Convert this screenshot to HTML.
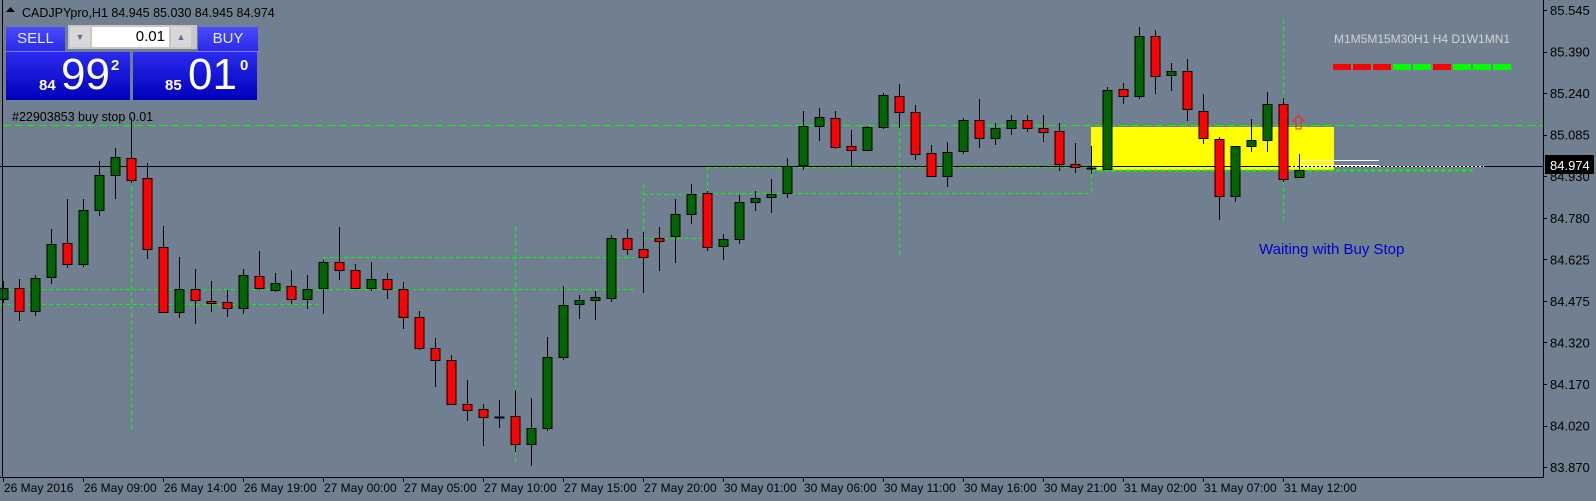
<!DOCTYPE html>
<html><head><meta charset="utf-8">
<style>
html,body{margin:0;padding:0;}
body{width:1596px;height:501px;background:#708090;position:relative;overflow:hidden;font-family:"Liberation Sans",sans-serif;}
svg{position:absolute;left:0;top:0;}
.btnTop{position:absolute;height:24px;background:linear-gradient(#4b4bff,#2a2ae8);color:#e8e8ff;font-size:15px;text-align:center;line-height:24px;border-bottom:1px solid #8080ff;}
.big{position:absolute;top:52px;height:48px;background:linear-gradient(#2b2bf0,#0000b8);color:#fff;}
.big .s{position:absolute;font-size:15px;font-weight:bold;}
.big .l{position:absolute;font-size:44px;}
.big .e{position:absolute;font-size:15px;font-weight:bold;}
</style></head><body>
<svg id="c" width="1596" height="501" xmlns="http://www.w3.org/2000/svg"></svg>

<div class="btnTop" style="left:6px;top:27px;width:59px;">SELL</div>
<div class="btnTop" style="left:198px;top:27px;width:60px;">BUY</div>
<div style="position:absolute;left:68px;top:25px;width:129px;height:24px;background:#c8c8c8;"></div>
<div style="position:absolute;left:70px;top:27px;width:20px;height:20px;background:#d8d8d8;color:#5a6aa8;font-size:9px;text-align:center;line-height:20px;">&#9660;</div>
<div style="position:absolute;left:92px;top:27px;width:77px;height:20px;background:#fff;color:#000;font-size:15px;text-align:right;line-height:20px;box-sizing:border-box;padding-right:4px;">0.01</div>
<div style="position:absolute;left:171px;top:27px;width:20px;height:20px;background:#d8d8d8;color:#5a6aa8;font-size:9px;text-align:center;line-height:20px;">&#9650;</div>

<div class="big" style="left:6px;width:124px;"><span class="s" style="left:33px;top:25px;">84</span><span class="l" style="left:55px;top:-2px;">99</span><span class="e" style="left:105px;top:5px;">2</span></div>
<div class="big" style="left:133px;width:124px;"><span class="s" style="left:32px;top:25px;">85</span><span class="l" style="left:55px;top:-2px;">01</span><span class="e" style="left:107px;top:5px;">0</span></div>

<script>
var d=[
['g',288,299,281,303],['r',288,311,279,321],['g',278,311,275,316],['g',244,277,229,284],['r',243,264,199,268],
['g',210,264,199,267],['g',175,210,161,216],['g',157,175,148,199],['r',158,180,118,183],['r',178,249,163,259],
['r',247,312,226,312],['g',289,312,257,318],['r',289,300,269,324],['r',301,303,281,312],['r',302,308,290,317],
['g',275,308,269,314],['r',276,288,251,290],['g',283,290,273,292],['r',286,299,270,304],['g',289,299,275,309],
['g',262,288,260,314],['r',262,270,227,280],['r',270,288,264,288],['g',279,288,262,291],['r',279,289,273,299],
['r',289,317,282,329],['r',317,348,311,350],['r',348,360,338,387],['r',360,404,355,404],['r',404,410,380,421],
['r',409,417,404,446],['d',417,417,400,428],['r',416,444,390,452],['g',428,444,398,466],['g',357,428,337,431],
['g',305,357,286,360],['g',300,304,295,319],['g',297,300,291,320],['g',238,298,235,302],['r',238,249,229,255],
['r',249,257,232,293],['r',238,241,227,271],['g',214,236,199,263],['g',194,214,184,224],['r',193,247,191,251],
['g',239,246,234,260],['g',202,239,195,244],['g',198,202,191,211],['g',194,197,179,213],['g',166,193,158,198],
['g',126,165,111,170],['g',117,126,108,141],['r',118,147,111,149],['r',146,150,130,167],['g',127,150,126,151],
['g',95,127,93,129],['r',96,112,84,128],['r',112,154,105,160],['r',153,176,145,176],['g',152,176,142,187],
['g',120,151,118,154],['r',120,138,99,148],['g',128,138,123,145],['g',120,128,115,135],['r',120,128,115,132],
['r',128,132,115,142],['r',131,164,123,171],['r',164,167,143,173],['d',168,168,146,174],['g',90,169,87,169],
['r',89,96,83,104],['g',36,96,27,99],['r',36,76,30,94],['g',71,75,63,91],['r',71,109,59,121],
['r',111,138,94,144],['r',139,196,137,220],['g',146,196,146,202],['g',140,146,119,152],['g',104,140,92,152],
['r',104,179,98,182],['g',170,177,154,177]];
var s='';
function L(x1,y1,x2,y2,c,w,da){s+='<line x1="'+x1+'" y1="'+y1+'" x2="'+x2+'" y2="'+y2+'" stroke="'+c+'" stroke-width="'+(w||1)+'"'+(da?' stroke-dasharray="'+da+'"':'')+'/>';}
function T(x,y,t,sz,c,a){s+='<text x="'+x+'" y="'+y+'" font-family="Liberation Sans,sans-serif" font-size="'+sz+'" fill="'+c+'"'+(a?' text-anchor="'+a+'"':'')+'>'+t+'</text>';}
var G='#00ff00';
s+='<rect x="1091" y="127" width="243" height="43" fill="#ffff00"/>';
L(3,125.5,1543,125.5,G,1,'8 4');
L(0,289.5,636,289.5,G,1,'4 3');L(0,304.5,320,304.5,G,1,'4 3');
L(323,257.5,636,257.5,G,1,'4 3');
L(131.5,166,131.5,430,G,1,'4 3');L(515.5,227,515.5,465,G,1,'4 3');
L(643.5,184,643.5,289,G,1,'4 3');L(643,194.5,707,194.5,G,1,'4 3');L(643,238.5,707,238.5,G,1,'4 3');
L(707.5,167,707.5,194,G,1,'4 3');L(707,167.5,1091,167.5,G,1,'4 3');L(707,193.5,1091,193.5,G,1,'4 3');
L(1091.5,167,1091.5,193,G,1,'4 3');L(899.5,125,899.5,256,G,1,'4 3');
L(1283.5,20,1283.5,220,G,1,'4 3');L(1091,170.5,1475,170.5,G,2,'4 3');
L(0,166.5,1543,166.5,'#000');
L(1291,166.5,1484,166.5,'#fff',1,'2 2');
L(1300,160.5,1379,160.5,'#fff');L(1300,165.5,1379,165.5,'#fff');
for(var i=0;i<d.length;i++){var c=d[i],x=3.5+16*i;
 L(x,c[3],x,c[4],'#000');
 if(c[0]=='d'){L(x-5,c[1]+0.5,x+5,c[1]+0.5,'#000',2);continue;}
 var h=Math.max(c[2]-c[1],2);
 s+='<rect x="'+(x-4.5)+'" y="'+(c[1]+0.5)+'" width="9" height="'+h+'" fill="'+(c[0]=='g'?'#006400':'#ff0000')+'" stroke="#000" stroke-width="1"/>';}
s+='<path d="M1298.5 115.5 L1304 121 L1301 121 L1301 129 L1296 129 L1296 121 L1293 121 Z" fill="none" stroke="#ff2020" stroke-width="1"/>';
T(1334,43,'M1M5M15M30H1 H4 D1W1MN1',12,'#d3d3d3');
var tc=['#ff0000','#ff0000','#ff0000','#00ff00','#00ff00','#ff0000','#00ff00','#00ff00','#00ff00'];
for(var k=0;k<9;k++)s+='<rect x="'+(1333+k*20)+'" y="64" width="18" height="6" fill="'+tc[k]+'"/>';
T(1259,254,'Waiting with Buy Stop',15,'#0000cd');
L(2.5,0,2.5,477,'#000');L(1543.5,0,1543.5,477,'#000');L(0,477.5,1544,477.5,'#000');
var pl=['85.545','85.390','85.240','85.085','84.930','84.780','84.625','84.475','84.320','84.170','84.020','83.870'];
for(var k=0;k<pl.length;k++){var y=10+41.55*k;L(1543,Math.round(y)+0.5,1547,Math.round(y)+0.5,'#000');
 T(1550,y+5,pl[k],13,'#000');}
s+='<rect x="1545" y="155" width="49" height="19" fill="#000"/>';T(1550,170,'84.974',13,'#fff');
var dl=['26 May 2016','26 May 09:00','26 May 14:00','26 May 19:00','27 May 00:00','27 May 05:00','27 May 10:00','27 May 15:00','27 May 20:00','30 May 01:00','30 May 06:00','30 May 11:00','30 May 16:00','30 May 21:00','31 May 02:00','31 May 07:00','31 May 12:00'];
for(var k=0;k<dl.length;k++){var x=3+80*k;L(x+0.5,477,x+0.5,482,'#000');T(x+1,492,dl[k],12,'#000');}
s+='<path d="M6 12 L10.5 7 L15 12 Z" fill="#000"/>';
T(22,17,'CADJPYpro,H1  84.945 85.030 84.945 84.974',12.5,'#000');
T(12,121,'#22903853 buy stop 0.01',12.5,'#000');
document.getElementById('c').innerHTML=s;
</script>
</body></html>
